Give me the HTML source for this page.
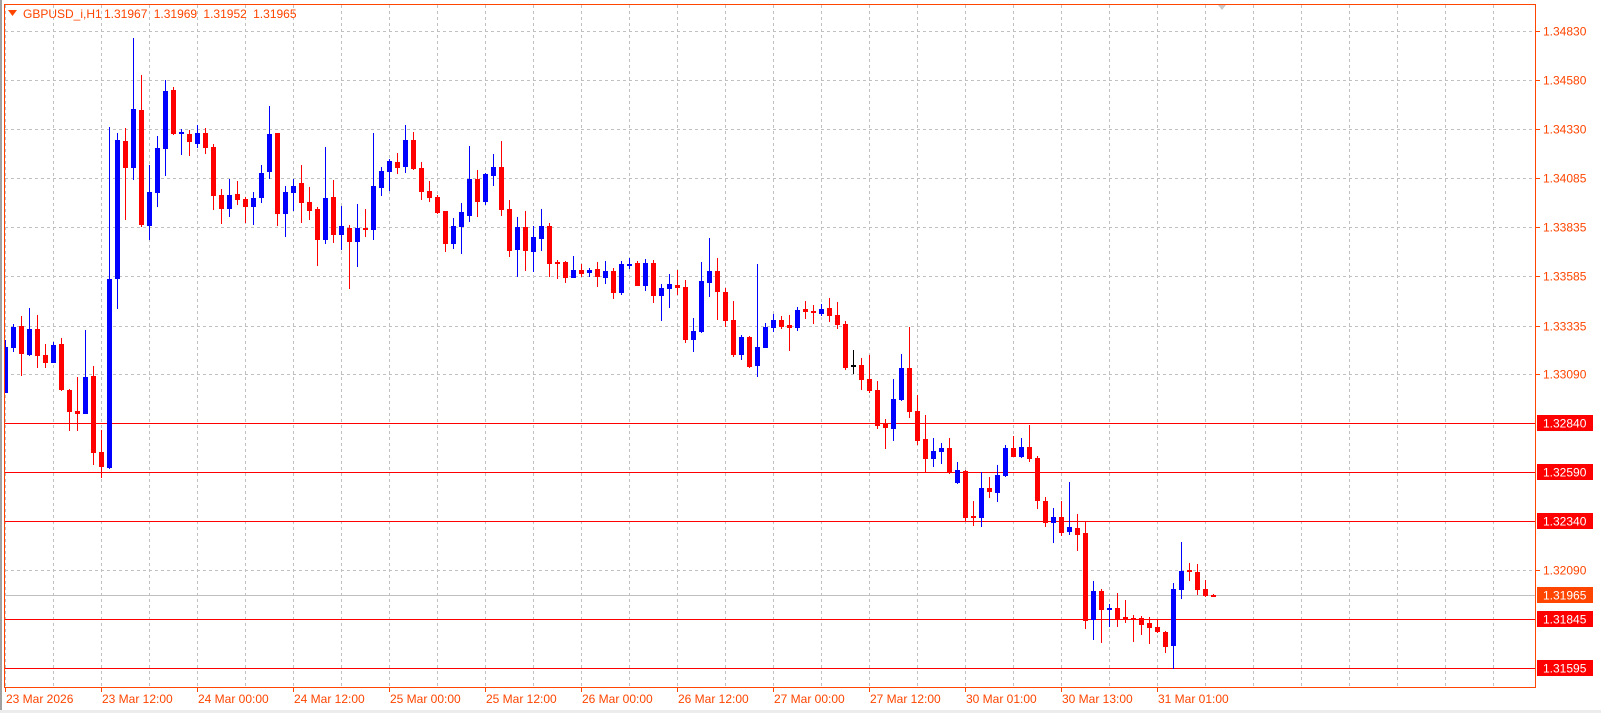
<!DOCTYPE html>
<html><head><meta charset="utf-8"><style>
html,body{margin:0;padding:0;background:#fff;width:1601px;height:713px;overflow:hidden}
svg{display:block}
text{font-family:"Liberation Sans",sans-serif;font-size:12px}
</style></head><body>
<svg id="c" width="1601" height="713" xmlns="http://www.w3.org/2000/svg">
<rect x="0" y="0" width="1601" height="713" fill="#fff"/>
<rect x="0" y="0" width="2" height="713" fill="#a0a0a0"/>
<rect x="0" y="710" width="1601" height="3" fill="#ececec"/>
<g id="grid"></g>
<g id="lines"></g>
<g id="candles"></g>
<rect x="4.5" y="4.5" width="1531" height="683" fill="none" stroke="#ff4500" stroke-width="1"/>
<polygon points="1218,5 1226,5 1222,10" fill="#c8c8c8"/>
<polygon points="8,10 17,10 12.5,16" fill="#ff4500"/>
<text x="23" y="18" fill="#ff4500">GBPUSD_i,H1</text>
<text x="104" y="18" fill="#ff4500" word-spacing="3">1.31967 1.31969 1.31952 1.31965</text>
<g id="axis"></g>
</svg>
<script>
var NS="http://www.w3.org/2000/svg";
function el(p,t,a,txt){var e=document.createElementNS(NS,t);for(var k in a)e.setAttribute(k,a[k]);if(txt!==undefined)e.textContent=txt;document.getElementById(p).appendChild(e);return e;}
var gy=[31,80,129,178,227,276,326,374,423,472,521,570,619,668];
gy.forEach(function(y){el('grid','line',{x1:5,x2:1535,y1:y+.5,y2:y+.5,stroke:'#c0c0c0','stroke-dasharray':'3,3'});});
for(var x=5;x<1535;x+=48){el('grid','line',{x1:x+.5,x2:x+.5,y1:5,y2:687,stroke:'#c0c0c0','stroke-dasharray':'3,3'});}
[423,472,521,619,668].forEach(function(y){el('lines','line',{x1:5,x2:1535,y1:y+.5,y2:y+.5,stroke:'#ff0000'});});
el('lines','line',{x1:5,x2:1535,y1:595.5,y2:595.5,stroke:'#c0c0c0'});
var pl=[[31,'1.34830'],[80,'1.34580'],[129,'1.34330'],[178,'1.34085'],[227,'1.33835'],[276,'1.33585'],[326,'1.33335'],[374,'1.33090'],[570,'1.32090']];
pl.forEach(function(p){el('axis','line',{x1:1535,x2:1540,y1:p[0]+.5,y2:p[0]+.5,stroke:'#ff4500'});el('axis','text',{x:1543,y:p[0]+4.5,fill:'#ff4500'},p[1]);});
[[423,'1.32840','#ff0000'],[472,'1.32590','#ff0000'],[521,'1.32340','#ff0000'],[595,'1.31965','#ff4500'],[619,'1.31845','#ff0000'],[668,'1.31595','#ff0000']].forEach(function(p){
 el('axis','rect',{x:1537,y:p[0]-8,width:56,height:16,fill:p[2]});
 el('axis','text',{x:1543,y:p[0]+4.5,fill:'#fff'},p[1]);});
var tl=['23 Mar 2026','23 Mar 12:00','24 Mar 00:00','24 Mar 12:00','25 Mar 00:00','25 Mar 12:00','26 Mar 00:00','26 Mar 12:00','27 Mar 00:00','27 Mar 12:00','30 Mar 01:00','30 Mar 13:00','31 Mar 01:00'];
tl.forEach(function(t,i){var x=5+96*i;el('axis','line',{x1:x+.5,x2:x+.5,y1:687,y2:692,stroke:'#ff4500'});el('axis','text',{x:x+1,y:703,fill:'#ff4500'},t);});
var d=[[393,347,340,393],[348,327,324,352],[326,354,316,376],[355,329,308,356],[329,356,315,368],[355,363,344,368],[363,345,342,363],[344,390,338,391],[390,412,389,431],[411,414,377,431],[414,377,330,414],[376,453,366,465],[452,467,430,478],[468,279,127,469],[279,140,133,309],[141,168,128,220],[168,109,38,180],[110,225,75,227],[226,192,165,240],[193,148,136,207],[149,91,80,176],[90,134,87,135],[134,132,129,155],[134,142,130,156],[144,133,125,148],[133,148,128,154],[147,196,144,210],[195,209,189,224],[209,195,179,217],[194,200,181,205],[199,207,197,223],[207,198,192,225],[198,173,165,203],[172,134,106,179],[133,214,133,226],[214,192,186,237],[193,186,179,211],[183,203,165,223],[202,211,187,220],[209,240,207,266],[240,198,147,244],[197,235,180,243],[235,226,206,250],[228,242,225,289],[242,228,204,267],[228,230,209,237],[230,186,133,240],[188,171,167,196],[172,161,159,191],[162,168,153,174],[167,140,125,173],[140,169,132,170],[168,192,162,200],[191,198,181,202],[197,213,195,214],[211,244,211,252],[244,226,218,249],[227,212,203,254],[216,179,146,222],[179,202,170,217],[202,174,173,205],[176,167,154,186],[167,210,141,216],[209,251,200,257],[250,227,217,277],[227,251,211,271],[252,237,226,272],[239,226,209,251],[226,264,223,277],[262,263,260,279],[262,278,261,283],[278,270,256,278],[270,274,264,277],[273,270,268,277],[269,277,262,287],[278,271,261,284],[271,293,268,299],[293,264,261,295],[265,264,258,269],[263,286,261,286],[286,263,259,291],[263,296,260,303],[296,288,284,321],[289,284,274,308],[285,288,270,295],[287,340,280,343],[340,331,318,352],[332,281,262,333],[283,271,238,297],[271,292,258,320],[292,321,288,327],[320,355,301,357],[355,337,335,360],[337,367,336,368],[366,347,264,377],[348,327,323,348],[328,320,314,332],[320,327,316,329],[325,328,315,351],[328,310,307,331],[309,312,301,319],[311,313,305,324],[314,309,304,316],[308,316,298,322],[315,325,302,329],[324,368,321,370],[365,365,350,374],[365,380,358,390],[379,391,355,393],[390,426,381,429],[423,428,419,449],[429,399,379,441],[400,368,354,401],[368,412,327,418],[411,441,395,445],[439,459,415,472],[459,451,438,467],[452,448,443,464],[448,473,438,474],[483,470,462,484],[471,518,470,521],[516,518,501,526],[518,488,472,527],[488,492,477,498],[493,475,465,502],[476,448,445,477],[448,457,436,457],[457,447,438,458],[447,459,425,462],[458,501,456,509],[501,523,497,527],[523,517,508,543],[517,533,501,536],[532,527,482,535],[528,535,514,551],[533,621,522,629],[620,591,581,640],[591,610,589,643],[610,608,604,627],[608,619,593,627],[617,619,600,623],[618,619,615,642],[618,625,616,635],[623,628,617,644],[627,632,619,633],[632,647,631,653],[646,589,583,669],[590,571,542,599],[570,572,563,581],[572,590,564,595],[589,596,580,597],[595,596,594,597]];
d.forEach(function(c,i){
 var x=5+8*i,o=c[0],cl=c[1],h=c[2],l=c[3];
 var col=o>cl?'#0000ff':(o<cl?'#ff0000':'#000000');
 el('candles','rect',{x:x,y:h,width:1,height:Math.max(1,l-h),fill:col});
 var t=Math.min(o,cl),b=Math.max(o,cl);
 if(x-2<6){el('candles','rect',{x:6,y:t,width:x+3-6,height:Math.max(2,b-t),fill:col});}
 else el('candles','rect',{x:x-2,y:t,width:5,height:Math.max(2,b-t),fill:col});
});
</script>
</body></html>
